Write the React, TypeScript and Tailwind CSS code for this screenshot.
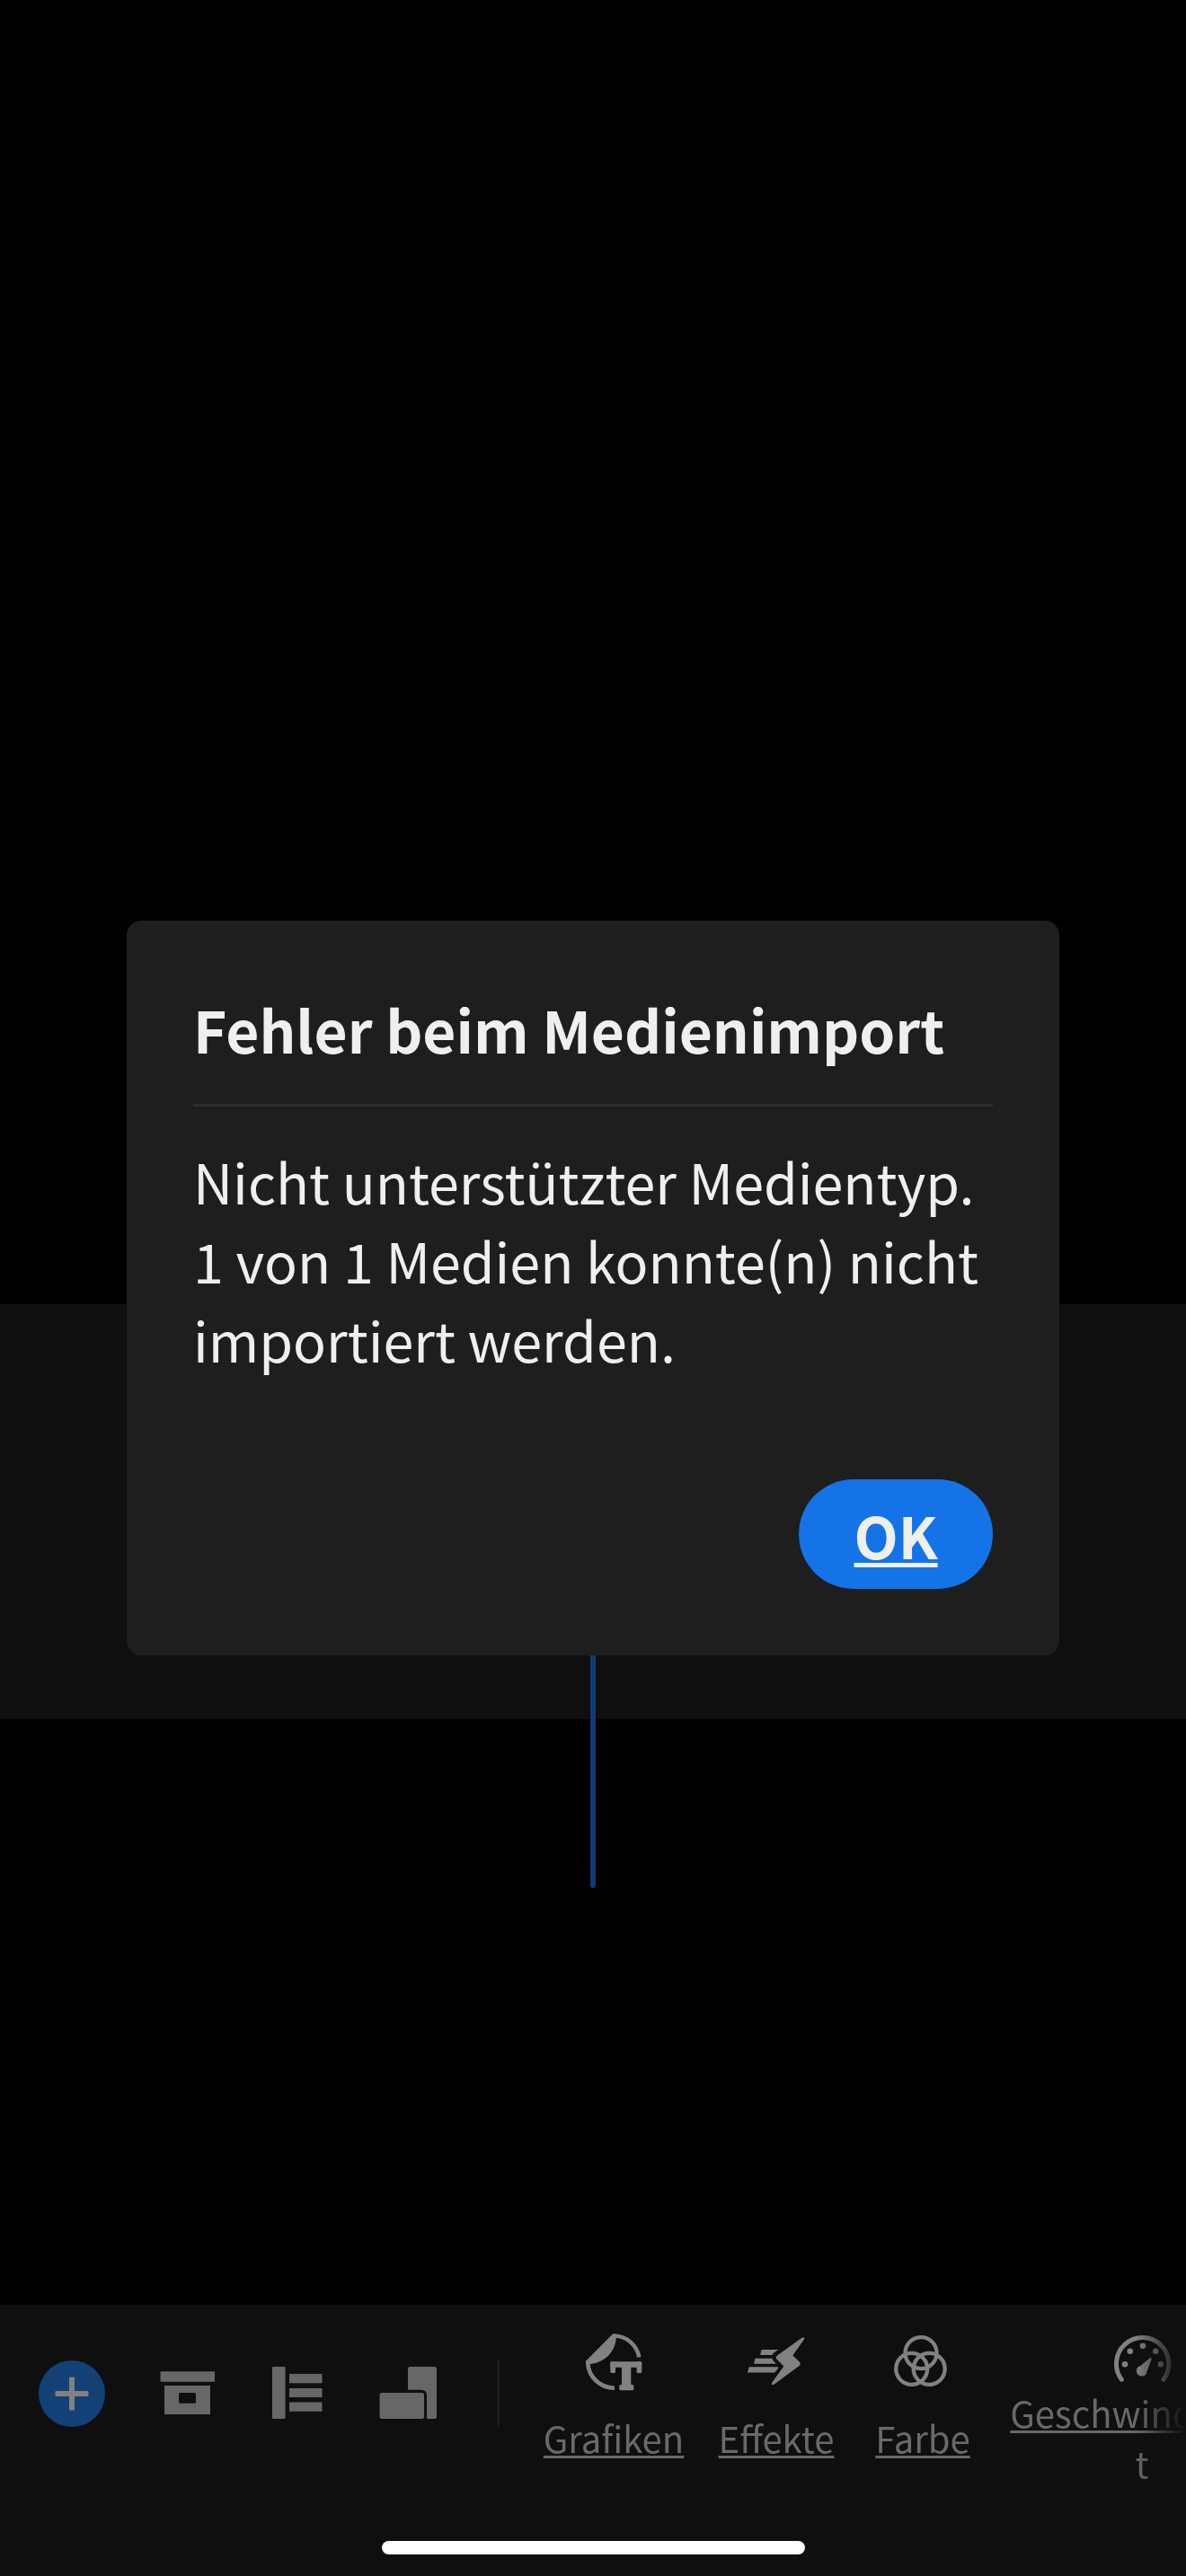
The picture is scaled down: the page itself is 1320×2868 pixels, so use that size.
import type { ReactNode } from 'react'

interface IconProps {
  viewBox: string
  className: string
  children: ReactNode
}

function Icon({ viewBox, className, children }: IconProps) {
  return (
    <svg viewBox={viewBox} className={className} fill="currentColor" aria-hidden="true">
      {children}
    </svg>
  )
}

const TOOLS = [
  {
    label: 'Projekt',
    icon: (
      <>
        <rect x="2.5" y="7.3" width="60.5" height="11.4" rx="1" />
        <path fillRule="evenodd" d="M7 23H58V55H7ZM24.500 31A1.500 1.500 0 0 0 23 32.500V41.200A1.500 1.500 0 0 0 24.500 42.700H40.500A1.500 1.500 0 0 0 42 41.200V32.500A1.500 1.500 0 0 0 40.500 31Z" />
      </>
    ),
  },
  {
    label: 'Spuren',
    icon: (
      <>
        <rect x="4" y="2" width="14.500" height="58" rx="1" />
        <rect x="23" y="10" width="36.500" height="10.300" />
        <rect x="23" y="26" width="36.500" height="10" />
        <rect x="23" y="41.500" width="36.500" height="10.300" />
      </>
    ),
  },
  {
    label: 'Format',
    icon: (
      <>
        <rect x="0.5" y="31" width="49.500" height="29" rx="2.500" />
        <path d="M34.500 2H61.500A2.500 2.500 0 0 1 64 4.500V57.500A2.500 2.500 0 0 1 61.500 60H53V34Q53 27.700 46.500 27.700H32V4.500A2.500 2.500 0 0 1 34.500 2Z" />
      </>
    ),
  },
]

const CATEGORIES = [
  {
    label: 'Grafiken',
    rest: '',
    width: 'w-[182px]',
    icon: (
      <>
        <path
          d="M37 7.500A29 29 0 0 1 64.300 31.300M7.200 38A29.500 29.500 0 0 0 37 65.700"
          fill="none"
          stroke="currentColor"
          strokeWidth="4.600"
        />
        <path d="M39 6.500C39 24 28 37.500 7 39.500L5 38.500V35.800L34.500 6Q36.500 4.300 39 6.500Z" />
        <rect x="32.300" y="36.300" width="35" height="6.500" rx="2" />
        <rect x="32.300" y="36.300" width="5.700" height="12.700" rx="1.500" />
        <rect x="61.600" y="36.300" width="5.700" height="12.700" rx="1.500" />
        <rect x="45" y="40" width="10.300" height="27" />
        <rect x="42.300" y="62" width="16" height="6.300" rx="1.500" />
      </>
    ),
  },
  {
    label: 'Effekte',
    rest: '',
    width: 'w-[180px]',
    icon: (
      <>
        <path d="M64.500 9.700L37 29.500Q34.500 31.500 36.500 33.500L44.300 41.500L31.300 59.500C30.300 62 31.500 62.800 33.500 61.700L61.500 41Q63.800 38.800 61.800 36.500L54.300 29.500L67 11.500C67.700 9.500 66.500 8.500 64.500 9.700Z" />
        <path d="M19.600 23H38.300L33.500 26.300Q32 27.500 31.500 29H18Z" />
        <path d="M12.500 32.700H31.500Q31.700 34.500 33 35.800L36 38.700H11Z" />
        <path d="M5.600 42.300H37.500Q39 42.500 38 43.800L34.300 48.500H4Z" />
      </>
    ),
  },
  {
    label: 'Farbe',
    rest: '',
    width: 'w-[146px]',
    icon: (
      <g fill="none" stroke="currentColor" strokeWidth="4.300">
        <circle cx="34" cy="26.700" r="17.500" />
        <circle cx="23.700" cy="44.300" r="17.500" />
        <circle cx="43.200" cy="44.300" r="17.500" />
      </g>
    ),
  },
  {
    label: 'Geschwindigkei',
    rest: 't',
    width: 'w-[342px]',
    icon: (
      <>
        <path
          d="M13.300 56.300A29.200 29.200 0 1 1 60 56.300"
          fill="none"
          stroke="currentColor"
          strokeWidth="5"
          strokeLinecap="round"
        />
        <circle cx="17" cy="39.300" r="3.300" />
        <circle cx="22.700" cy="24.700" r="3.300" />
        <circle cx="37" cy="18.800" r="3.300" />
        <circle cx="51.300" cy="24.700" r="3.300" />
        <circle cx="57" cy="39.300" r="3.300" />
        <path d="M44.800 32.300L34.500 41A5.800 5.800 0 1 0 41.500 47.500L46.700 33.500Q46.500 31.500 44.800 32.300Z" />
      </>
    ),
  },
]

function Timeline() {
  return (
    <section aria-label="Zeitleiste" className="relative h-[462px] bg-[#0f0f0f]">
      {/* Playhead, runs past the track area */}
      <div className="absolute left-1/2 top-0 h-[650px] w-1.5 -translate-x-1/2 rounded-full bg-[#0f3b73]" />
    </section>
  )
}

function Toolbar() {
  return (
    <footer className="flex flex-col overflow-hidden bg-[#0f0f0f]">
      <div className="flex items-start">
        <div className="flex shrink-0 items-center gap-[59px] pl-[43px] pt-[62px] text-[#676767]">
          <button
            aria-label="Medien hinzufügen"
            className="flex size-[74px] items-center justify-center rounded-full bg-[#134076] text-[#818181]"
          >
            <Icon viewBox="0 0 38 38" className="size-[38px]">
              <rect x="0.5" y="16" width="37" height="6" rx="1" />
              <rect x="16" y="0.5" width="6" height="37" rx="1" />
            </Icon>
          </button>
          {TOOLS.map((tool) => (
            <button key={tool.label} aria-label={tool.label}>
              <Icon viewBox="0 0 64 64" className="size-16">
                {tool.icon}
              </Icon>
            </button>
          ))}
          <div className="ml-2 h-[74px] w-[3px] bg-[#1a1a1a]" />
        </div>

        <nav
          aria-label="Werkzeuge"
          className="flex min-w-0 flex-1 overflow-hidden pl-9 pt-8 [mask-image:linear-gradient(to_left,transparent,black_56px)]"
        >
          {CATEGORIES.map((item) => (
            <a key={item.label} href="#" className={`flex shrink-0 flex-col items-center ${item.width}`}>
              <Icon viewBox="0 5 72 64" className="h-16 w-[72px] text-[#818181]">
                {item.icon}
              </Icon>
              <span className="-mt-1 flex h-28 items-center">
                <span className="max-w-[300px] break-all text-center text-[40px] leading-[56px] text-[#696969]">
                  <span className="underline decoration-[3px] underline-offset-[3px] [text-decoration-skip-ink:none]">
                    {item.label}
                  </span>
                  {item.rest}
                </span>
              </span>
            </a>
          ))}
        </nav>
      </div>

      {/* Home indicator */}
      <div className="mx-auto mb-6 mt-[59px] h-[15px] w-[471px] rounded-full bg-white" />
    </footer>
  )
}

function ErrorDialog() {
  return (
    <div className="fixed inset-0 flex items-center justify-center px-[141px]">
      <div
        role="alertdialog"
        aria-labelledby="dialog-title"
        aria-describedby="dialog-text"
        className="flex w-full flex-col rounded-2xl bg-[#1e1e1e] p-[74px] text-[#efefef]"
      >
        <h1 id="dialog-title" className="border-b-[3px] border-[#2c2c2c] pb-[38px] text-[64px] font-bold leading-[92px]">
          Fehler beim Medienimport
        </h1>
        <p id="dialog-text" className="mt-[39px] text-[61px] leading-[88px]">
          Nicht unterstützter Medientyp. 1 von 1 Medien konnte(n) nicht importiert werden.
        </p>
        <button className="mt-[112px] flex h-[122px] w-[216px] items-center justify-center self-end rounded-full bg-[#1473e6] text-[64px] font-bold underline decoration-[5px] underline-offset-[4px]">
          OK
        </button>
      </div>
    </div>
  )
}

export default function App() {
  return (
    <div className="flex min-h-screen flex-col bg-black font-['Noto_Sans_CJK_SC','Noto_Sans',sans-serif]">
      <main className="flex flex-1 flex-col">
        <div className="flex-1" />
        <Timeline />
        <div className="h-[652px]" />
      </main>
      <Toolbar />
      <ErrorDialog />
    </div>
  )
}
